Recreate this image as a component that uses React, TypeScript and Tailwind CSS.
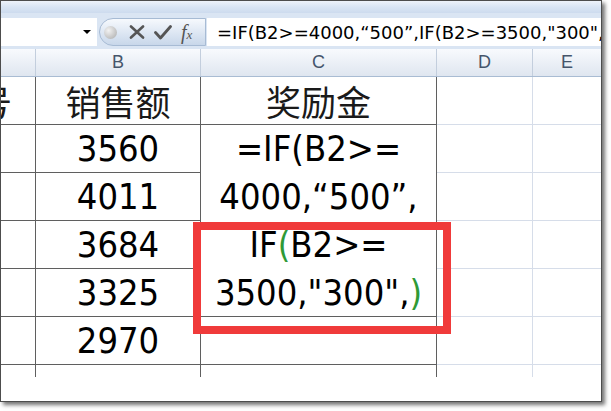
import React from 'react';

const num = "font-['DejaVu_Sans_Condensed','DejaVu_Sans',sans-serif] font-stretch-condensed text-[36px] leading-[1.2] text-black";
const cjk = "font-['Noto_Sans_CJK_SC',sans-serif] text-[35px] leading-[1.25] text-[#1a1a1a]";

const dark = 'border-[#5f5f5f]';
const light = 'border-[#d6dde9]';

const salesValues = ['3560', '4011', '3684', '3325', '2970'];

function Cell({ className = '', children }: { className?: string; children?: React.ReactNode }) {
  return (
    <div className={`flex items-center justify-center border-r border-b ${className}`}>
      {children}
    </div>
  );
}

export default function App() {
  return (
    <div className="w-[611px] h-[411px] bg-white overflow-hidden">
      <div className="w-[602px] h-[402px] border border-[#4d4d4d] bg-white shadow-[3px_3px_4px_rgba(0,0,0,0.55)] flex flex-col overflow-hidden">
        {/* ribbon edge */}
        <div className="h-[12px] shrink-0 bg-gradient-to-b from-[#eef3fa] via-[#d9e5f4] to-[#cddbee]" />

        {/* formula bar */}
        <div className="h-[36px] shrink-0 bg-[#dae5f3] flex items-start pt-[5px]">
          <div className="w-[96px] h-[28px] bg-white flex items-center justify-end pr-[6px]">
            <span className="w-0 h-0 border-l-[4px] border-r-[4px] border-t-[4px] border-l-transparent border-r-transparent border-t-black" />
          </div>
          <div className="ml-[2px] w-[107px] h-[28px] rounded-l-[14px] border border-[#a7bbd4] bg-gradient-to-b from-[#f6f9fd] to-[#c8d7ea] flex items-center">
            <span className="ml-[4px] w-[13px] h-[13px] rounded-full bg-[radial-gradient(circle_at_35%_35%,#f2f2f2,#a9a9a9)]" />
            <svg className="ml-[12px]" width="16" height="14" viewBox="0 0 16 14">
              <path d="M2 1.5 L14 12.5 M14 1.5 L2 12.5" stroke="#555" strokeWidth="2.6" strokeLinecap="round" />
            </svg>
            <svg className="ml-[9px]" width="18" height="15" viewBox="0 0 18 15">
              <path d="M1.5 7.5 L6.5 13 L16.5 1.5" stroke="#555" strokeWidth="2.8" fill="none" strokeLinecap="round" strokeLinejoin="round" />
            </svg>
            <span className="ml-[9px] font-['Liberation_Serif',serif] italic text-[#555] text-[20px] leading-[1.2]">
              f<span className="text-[13px]">x</span>
            </span>
          </div>
          <div className="ml-[1px] flex-1 h-[28px] bg-white flex items-center pl-[10px] overflow-hidden whitespace-nowrap font-['DejaVu_Sans',sans-serif] text-[18px] text-black">
            =IF(B2&gt;=4000,“500”,IF(B2&gt;=3500,"300",
          </div>
        </div>

        {/* column headers */}
        <div className="h-[28px] shrink-0 flex border-b border-[#a9bcd3] bg-gradient-to-b from-[#f8fafd] to-[#dfe6f0] font-['Liberation_Sans',sans-serif] text-[18px] text-[#45556b]">
          <div className="w-[35px] border-r border-[#c3cedd]" />
          <div className="w-[165px] border-r border-[#c3cedd] flex items-center justify-center">B</div>
          <div className="w-[236px] border-r border-[#c3cedd] flex items-center justify-center">C</div>
          <div className="w-[96px] border-r border-[#c3cedd] flex items-center justify-center">D</div>
          <div className="flex-1 flex items-center justify-center">E</div>
        </div>

        {/* sheet */}
        <div className="relative shrink-0 grid grid-cols-[35px_165px_236px_96px_1fr] grid-rows-[48px_48px_48px_48px_48px_48px_12px]">
          {/* header row; column A only shows the tail of its title */}
          <Cell className={`${dark} justify-start overflow-hidden`}>
            <span className={`${cjk} -ml-[24px]`}>号</span>
          </Cell>
          <Cell className={dark}><span className={cjk}>销售额</span></Cell>
          <Cell className={dark}><span className={cjk}>奖励金</span></Cell>
          <Cell className={light} />
          <Cell className={`${light} border-r-0`} />

          {/* row 2, C holds the wrapped formula */}
          <Cell className={dark} />
          <Cell className={dark}><span className={num}>{salesValues[0]}</span></Cell>
          <div className={`row-span-4 border-r border-b ${dark} flex flex-col`}>
            <div className={`h-[48px] flex items-center justify-center ${num}`}>=IF(B2&gt;=</div>
            <div className={`h-[48px] flex items-center justify-center ${num}`}>4000,“500”,</div>
            <div className={`h-[48px] flex items-center justify-center ${num}`}>
              IF<span className="text-[#2f9a36]">(</span>B2&gt;=
            </div>
            <div className={`h-[48px] flex items-center justify-center ${num}`}>
              3500,"300",<span className="text-[#2f9a36]">)</span>
            </div>
          </div>
          <Cell className={light} />
          <Cell className={`${light} border-r-0`} />

          {salesValues.slice(1, 4).map((v) => (
            <React.Fragment key={v}>
              <Cell className={dark} />
              <Cell className={dark}><span className={num}>{v}</span></Cell>
              <Cell className={light} />
              <Cell className={`${light} border-r-0`} />
            </React.Fragment>
          ))}

          {/* row 6 */}
          <Cell className={dark} />
          <Cell className={dark}><span className={num}>{salesValues[4]}</span></Cell>
          <Cell className={dark} />
          <Cell className={light} />
          <Cell className={`${light} border-r-0`} />

          {/* cut-off row */}
          <div className={`border-r ${dark}`} />
          <div className={`border-r ${dark}`} />
          <div className={`border-r ${dark}`} />
          <div className={`border-r ${light}`} />
          <div />

          {/* highlight box */}
          <div className="absolute left-[192px] top-[145px] w-[258px] h-[112px] border-[8px] border-[#f03a3a]" />
        </div>

        <div className="flex-1 bg-white" />
      </div>
    </div>
  );
}
